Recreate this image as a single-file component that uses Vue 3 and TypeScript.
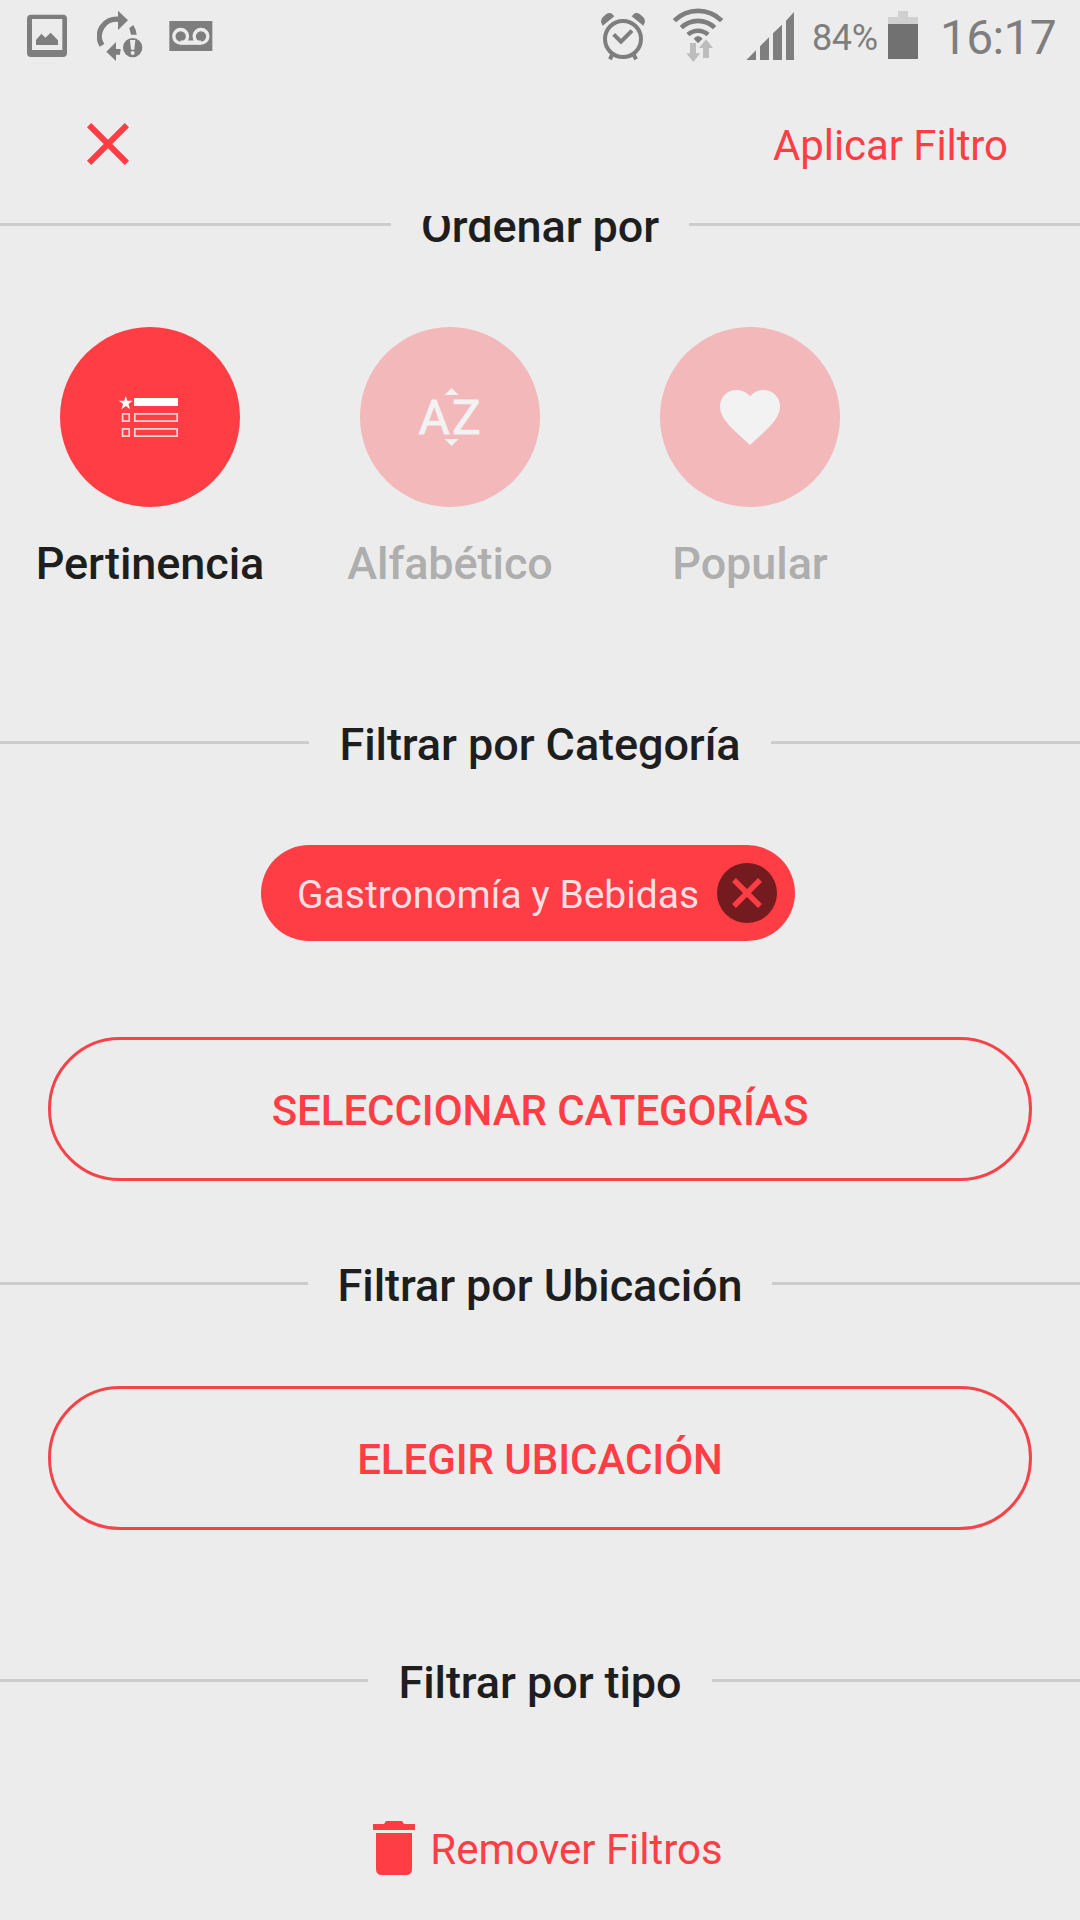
<script setup lang="ts">
import { ref } from 'vue'

type SortKey = 'relevance' | 'alpha' | 'popular'

interface SortOption {
  key: SortKey
  label: string
}

const sortOptions: SortOption[] = [
  { key: 'relevance', label: 'Pertinencia' },
  { key: 'alpha', label: 'Alfabético' },
  { key: 'popular', label: 'Popular' },
]

const selected = ref<SortKey>('relevance')
const categories = ref<string[]>(['Gastronomía y Bebidas'])

function removeCategory(name: string): void {
  categories.value = categories.value.filter((c) => c !== name)
}
</script>

<template>
  <div class="screen">
    <header class="status">
      <svg class="picture" width="40" height="80" viewBox="81 0 120 240">
        <path fill-rule="evenodd" d="M93 44H189Q201 44 201 56V159Q201 171 189 171H93Q81 171 81 159V56Q81 44 93 44ZM96 57V150H187V57Z" />
        <path d="M108 135V120L124 101L136 113L152 98L174 121V135Z" />
      </svg>
      <svg class="sync" width="46" height="80" viewBox="291 0 138 240">
        <path d="M306 136A51 51 0 0 1 356 58" fill="none" stroke="#7e7e7e" stroke-width="16" />
        <path d="M354 32L384 61L354 90ZM388 84L400 75Q408 88 410 104H393ZM319 155L348 126V147H362L360 164H348V183Z" />
        <circle cx="398" cy="143" r="29" />
        <path fill="#ececec" d="M390 120H406L403 149H393Z" />
        <circle fill="#ececec" cx="398" cy="159" r="6" />
      </svg>
      <svg class="voicemail" width="44" height="80" viewBox="507 0 132 240">
        <path d="M508 63H637V153H508Z" />
        <g fill="none" stroke="#ececec" stroke-width="10">
          <circle cx="542" cy="109" r="20.5" />
          <circle cx="603" cy="109" r="20.5" />
          <path d="M542 128H603" stroke-width="13" />
        </g>
      </svg>
      <svg class="alarm" width="46" height="80" viewBox="60 0 138 240">
        <circle cx="129" cy="117" r="54" fill="none" stroke="#7e7e7e" stroke-width="12" />
        <path d="M68 77L63 66Q62 58 68 52L78 43Q86 37 94 40L103 49ZM190 77L195 66Q196 58 190 52L180 43Q172 37 164 40L155 49Z" />
        <path d="M98 161L90 178M160 161L168 178" stroke="#7e7e7e" stroke-width="12" />
        <path d="M101 103L123 125L156 92" fill="none" stroke="#7e7e7e" stroke-width="12" />
      </svg>
      <svg class="wifi" width="52" height="80" viewBox="276 0 156 240">
        <g fill="none" stroke="#7e7e7e" stroke-width="14">
          <path d="M283 62A100 100 0 0 1 425 62" />
          <path d="M304 83A71 71 0 0 1 404 83" />
          <path d="M324 104A44 44 0 0 1 384 104" />
        </g>
        <path d="M341 116Q354 100 368 116L354 130Z" />
        <path fill="#bdbdbd" d="M330 129H348V160H361L340 186L319 160H330ZM369 174V144H357L378 118L399 144H387V174Z" />
      </svg>
      <svg class="signal" width="48" height="80" viewBox="498 0 144 240">
        <path d="M499 180L528 151V180ZM540 180V139L567 112V180ZM579 180V100L606 74V180ZM618 180V62L642 36V180Z" />
      </svg>
      <span class="percent">84%</span>
      <svg class="battery" width="30" height="80" viewBox="0 0 30 80">
        <path fill="#d0d0d0" d="M10 11H20V17H30V24H0V17H10Z" />
        <path fill="#717171" d="M0 24H30V59H0Z" />
      </svg>
      <span class="clock">16:17</span>
    </header>

    <nav class="appbar">
      <button class="plain close" aria-label="Cerrar">
        <svg width="72" height="72" viewBox="0 0 24 24">
          <path d="M19 6.41L17.59 5 12 10.59 6.41 5 5 6.41 10.59 12 5 17.59 6.41 19 12 13.41 17.59 19 19 17.59 13.41 12z" />
        </svg>
      </button>
      <button class="plain apply">Aplicar Filtro</button>
    </nav>

    <main class="viewport">
      <div class="content">
        <h2 class="heading first"><span>Ordenar por</span></h2>

        <div class="sorts">
          <button
            v-for="option in sortOptions"
            :key="option.key"
            class="plain sort"
            :class="{ active: option.key === selected }"
            @click="selected = option.key"
          >
            <span class="disc">
              <svg v-if="option.key === 'relevance'" width="72" height="72" viewBox="0 0 72 72">
                <path d="M11.8 15L13.4 19.8H18.7L14.5 22.9L16.1 28.2L11.8 25L7.5 28.2L9.1 22.9L4.9 19.8H10.2Z" />
                <path d="M20 17H64V25H20Z" />
                <path
                  class="outline"
                  d="M20.8 32.8H63.2V40.2H20.8ZM20.8 47.8H63.2V55.2H20.8ZM8.6 32.8H15.2V40.2H8.6ZM8.6 47.8H15.2V55.2H8.6Z"
                />
              </svg>
              <svg v-else-if="option.key === 'alpha'" width="72" height="72" viewBox="0 0 72 72">
                <text x="4.4" y="53.3">A</text>
                <text x="37.9" y="53.3">Z</text>
                <path d="M30.5 14L37.6 7L44.7 14ZM30.5 58L37.6 65L44.7 58Z" />
              </svg>
              <svg v-else width="72" height="72" viewBox="0 0 24 24">
                <path d="M12 21.35l-1.45-1.32C5.4 15.36 2 12.28 2 8.5 2 5.42 4.42 3 7.5 3c1.74 0 3.41.81 4.5 2.09C13.09 3.81 14.76 3 16.5 3 19.58 3 22 5.42 22 8.5c0 3.78-3.4 6.86-8.55 11.54z" />
              </svg>
            </span>
            <span class="label">{{ option.label }}</span>
          </button>
        </div>

        <h2 class="heading category"><span>Filtrar por Categoría</span></h2>
        <div class="chips">
          <div v-for="name in categories" :key="name" class="chip">
            <span>{{ name }}</span>
            <button class="plain remove" aria-label="Quitar" @click="removeCategory(name)">
              <svg width="60" height="60" viewBox="0 0 60 60">
                <path d="M17 17L43 43M43 17L17 43" />
              </svg>
            </button>
          </div>
        </div>
        <button class="pill">SELECCIONAR CATEGORÍAS</button>

        <h2 class="heading location"><span>Filtrar por Ubicación</span></h2>
        <button class="pill">ELEGIR UBICACIÓN</button>

        <h2 class="heading kind"><span>Filtrar por tipo</span></h2>
        <button class="plain clear">
          <svg width="42" height="54" viewBox="0 0 42 54">
            <path d="M0 3H11L13 0H29L31 3H42V9H0ZM3 12H39V48Q39 54 33 54H9Q3 54 3 48Z" />
          </svg>
          <span>Remover Filtros</span>
        </button>
      </div>
    </main>
  </div>
</template>

<style>
body {
  margin: 0;
  background: #ececec;
}
</style>

<style scoped>
.screen {
  display: flex;
  flex-direction: column;
  width: 1080px;
  height: 1920px;
  overflow: hidden;
  background: #ececec;
  color: #1e1e1e;
  font-family: Roboto, sans-serif;
}

svg {
  display: block;
  flex: none;
}

button {
  box-sizing: border-box;
  margin: 0;
  font-family: inherit;
}

.plain {
  padding: 0;
  border: 0;
  background: none;
}

.status {
  display: flex;
  flex: none;
  height: 80px;
  padding-left: 27px;
  color: #7e7e7e;
  fill: #7e7e7e;
}

.sync {
  margin-left: 30px;
}

.voicemail {
  margin-left: 26px;
}

.alarm {
  margin-left: 387px;
}

.wifi {
  margin-left: 26px;
}

.signal {
  margin-left: 22px;
}

.percent {
  width: 76px;
  margin: 17px 0 0 18px;
  font-size: 36px;
  letter-spacing: -0.4px;
  line-height: 42px;
}

.clock {
  margin: 9px 0 0 22px;
  font-size: 48px;
  letter-spacing: -0.7px;
  line-height: 57px;
}

.appbar {
  display: flex;
  flex: none;
  justify-content: space-between;
  align-items: flex-start;
  height: 136px;
  padding: 28px 72px 0;
  box-sizing: border-box;
}

.close {
  fill: #ff3d44;
}

.apply {
  margin-top: 13px;
  color: #ff3d44;
  font-size: 42px;
  letter-spacing: -0.07px;
  line-height: 49px;
}

.viewport {
  flex: 1;
  min-height: 0;
  overflow: hidden;
}

.content {
  display: flex;
  flex-direction: column;
}

.heading {
  display: flex;
  align-items: center;
  gap: 30px;
  height: 53px;
  margin: 0;
  font-size: 45px;
  font-weight: 500;
  letter-spacing: -0.08px;
  line-height: 53px;
  white-space: nowrap;
}

.heading::before,
.heading::after {
  content: '';
  flex: 1;
  height: 3px;
  margin-bottom: 4px;
  background: #cccccc;
}

.first {
  margin-top: -16px;
}

.sorts {
  display: grid;
  grid-template-columns: repeat(3, 300px);
  margin-top: 74px;
}

.sort {
  display: flex;
  flex-direction: column;
  align-items: center;
  color: #aeaeae;
  fill: #f2f2f2;
}

.disc {
  display: flex;
  align-items: center;
  justify-content: center;
  width: 180px;
  height: 180px;
  border-radius: 50%;
  background: #f2b8ba;
}

.disc text {
  font-size: 48px;
  stroke: #f2f2f2;
  stroke-width: 0.9px;
}

.outline {
  fill: none;
  stroke: #ffd3d5;
  stroke-width: 1.7px;
}

.label {
  margin-top: 30px;
  font-size: 45px;
  font-weight: 500;
  letter-spacing: -0.08px;
  line-height: 53px;
}

.active {
  color: #1e1e1e;
  fill: #ffffff;
}

.active .disc {
  background: #ff3d44;
}

.category {
  margin-top: 128px;
}

.chips {
  display: flex;
  justify-content: center;
  margin: 74px 24px 96px 0;
}

.chip {
  display: flex;
  align-items: center;
  justify-content: space-between;
  box-sizing: border-box;
  width: 534px;
  height: 96px;
  padding: 0 18px 0 36px;
  border-radius: 48px;
  background: #ff3d44;
  color: #ffdfe0;
  font-size: 39px;
  line-height: 46px;
  white-space: nowrap;
}

.chip span {
  margin-top: 4px;
}

.remove {
  width: 60px;
  height: 60px;
  border-radius: 50%;
  background: #731b1f;
  stroke: #ff3d44;
  stroke-width: 5.4px;
}

.pill {
  height: 144px;
  margin: 0 48px;
  padding: 2px 0 0;
  border: 3px solid #f4444a;
  border-radius: 72px;
  background: transparent;
  color: #ff3d44;
  font-size: 42px;
  font-weight: 500;
  letter-spacing: -0.05px;
  line-height: 49px;
}

.location {
  margin: 78px 0 74px;
}

.kind {
  margin-top: 126px;
}

.clear {
  display: flex;
  align-self: center;
  align-items: flex-start;
  margin: 112px 0 0 16px;
  color: #ff3d44;
  fill: #ff3d44;
  font-size: 42px;
  line-height: 49px;
}

.clear span {
  margin: 4px 0 0 15px;
}
</style>
